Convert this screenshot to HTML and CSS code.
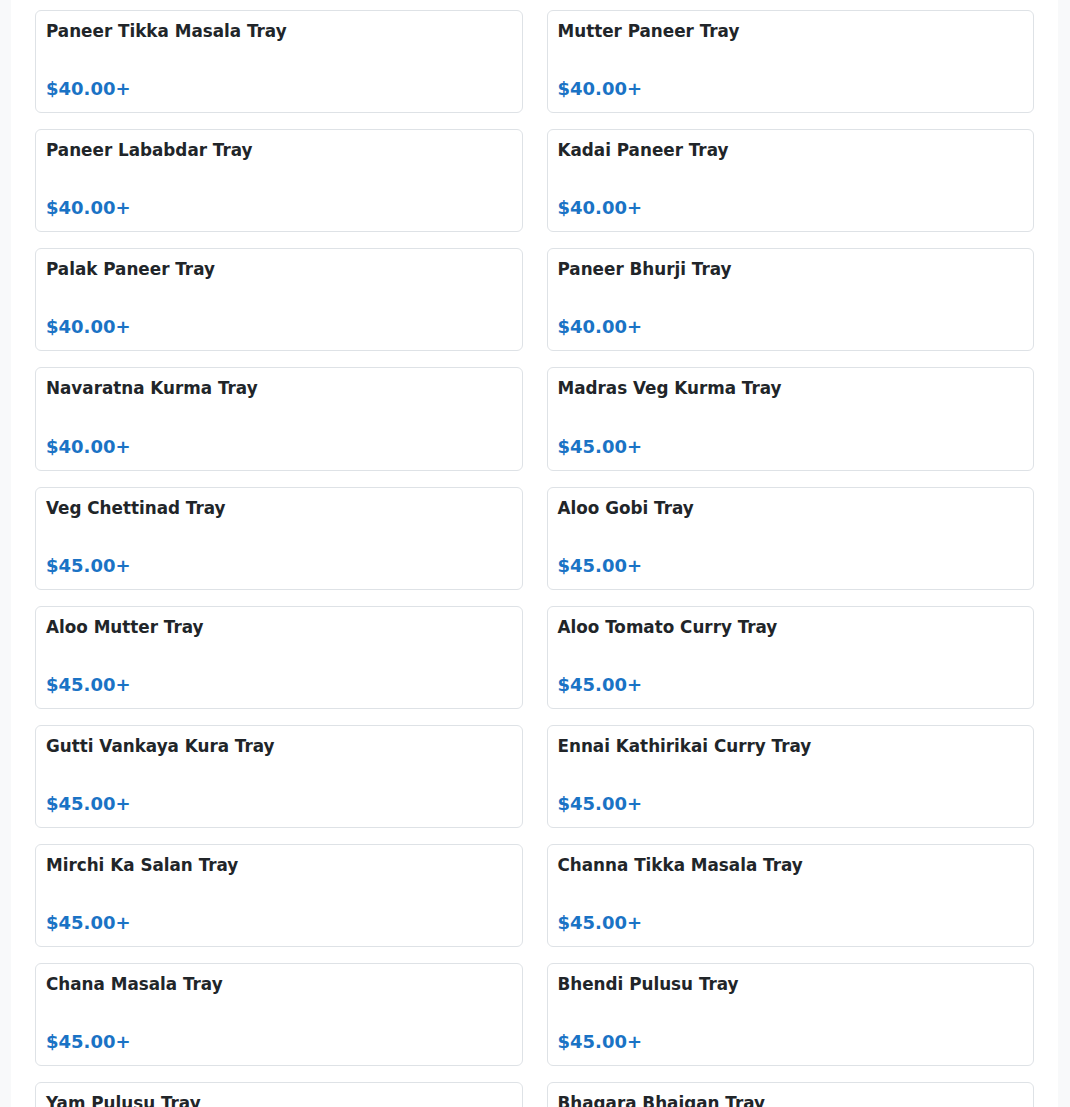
FILE: index.html
```html
<html>
<head>
    <meta charset="utf-8">
    <link rel="stylesheet" href="styles.css">
</head>
<body>
    <div class="menu-page">
        <div class="tray-grid">
            <div class="tray-card"><h3 class="tray-name">Paneer Tikka Masala Tray</h3><p class="tray-price">$40.00+</p></div>
            <div class="tray-card"><h3 class="tray-name">Mutter Paneer Tray</h3><p class="tray-price">$40.00+</p></div>
            <div class="tray-card"><h3 class="tray-name">Paneer Lababdar Tray</h3><p class="tray-price">$40.00+</p></div>
            <div class="tray-card"><h3 class="tray-name">Kadai Paneer Tray</h3><p class="tray-price">$40.00+</p></div>
            <div class="tray-card"><h3 class="tray-name">Palak Paneer Tray</h3><p class="tray-price">$40.00+</p></div>
            <div class="tray-card"><h3 class="tray-name">Paneer Bhurji Tray</h3><p class="tray-price">$40.00+</p></div>
            <div class="tray-card"><h3 class="tray-name">Navaratna Kurma Tray</h3><p class="tray-price">$40.00+</p></div>
            <div class="tray-card"><h3 class="tray-name">Madras Veg Kurma Tray</h3><p class="tray-price">$45.00+</p></div>
            <div class="tray-card"><h3 class="tray-name">Veg Chettinad Tray</h3><p class="tray-price">$45.00+</p></div>
            <div class="tray-card"><h3 class="tray-name">Aloo Gobi Tray</h3><p class="tray-price">$45.00+</p></div>
            <div class="tray-card"><h3 class="tray-name">Aloo Mutter Tray</h3><p class="tray-price">$45.00+</p></div>
            <div class="tray-card"><h3 class="tray-name">Aloo Tomato Curry Tray</h3><p class="tray-price">$45.00+</p></div>
            <div class="tray-card"><h3 class="tray-name">Gutti Vankaya Kura Tray</h3><p class="tray-price">$45.00+</p></div>
            <div class="tray-card"><h3 class="tray-name">Ennai Kathirikai Curry Tray</h3><p class="tray-price">$45.00+</p></div>
            <div class="tray-card"><h3 class="tray-name">Mirchi Ka Salan Tray</h3><p class="tray-price">$45.00+</p></div>
            <div class="tray-card"><h3 class="tray-name">Channa Tikka Masala Tray</h3><p class="tray-price">$45.00+</p></div>
            <div class="tray-card"><h3 class="tray-name">Chana Masala Tray</h3><p class="tray-price">$45.00+</p></div>
            <div class="tray-card"><h3 class="tray-name">Bhendi Pulusu Tray</h3><p class="tray-price">$45.00+</p></div>
            <div class="tray-card"><h3 class="tray-name">Yam Pulusu Tray</h3><p class="tray-price">$45.00+</p></div>
            <div class="tray-card"><h3 class="tray-name">Bhagara Bhaigan Tray</h3><p class="tray-price">$45.00+</p></div>
        </div>
    </div>
</body>
</html>
```

FILE: styles.css
```css
body {
    margin: 0;
    background-color: #f8f9fa;
    font-family: "DejaVu Sans", sans-serif;
    color: #212529;
}

.menu-page {
    margin: 0 12px 0 11px;
    padding: 10px 24px 24px 24px;
    background-color: #fff;
}

.tray-grid {
    display: grid;
    grid-template-columns: 1fr 1fr;
    column-gap: 24px;
    row-gap: 16px;
}

.tray-card {
    border: 1px solid #dee2e6;
    border-radius: 6px;
    padding: 10px 10px 12.4px 10px;
}

    .tray-card .tray-name {
        margin: 0 0 37px 0;
        font-size: 16.8px;
        line-height: 1.2;
        font-weight: bold;
    }

    .tray-card .tray-price {
        margin: 0;
        font-size: 18px;
        line-height: 1.2;
        font-weight: bold;
        color: #1a73c5;
    }
```
